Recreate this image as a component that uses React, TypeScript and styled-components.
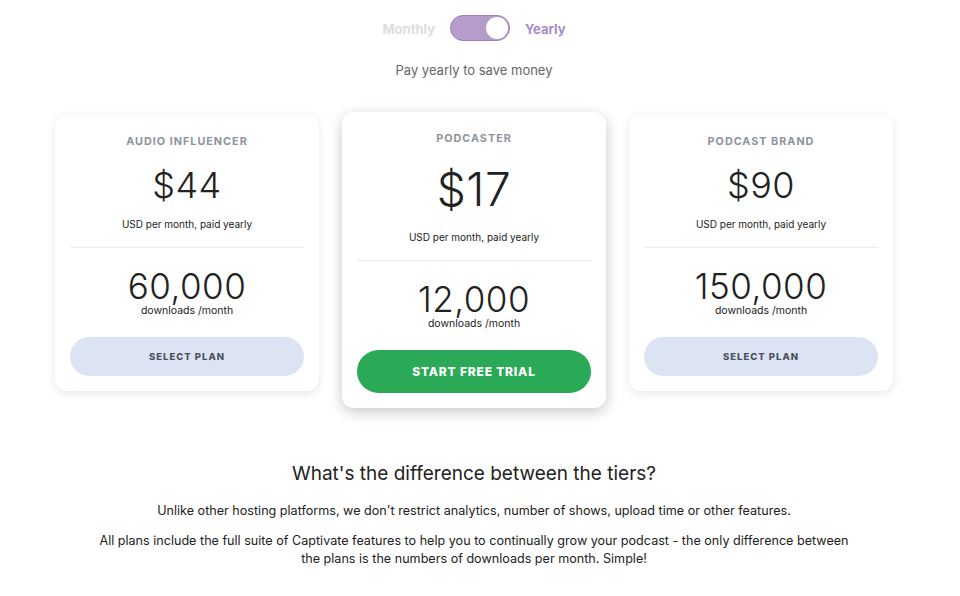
import React, { useState } from "react";
import styled, { createGlobalStyle } from "styled-components";

const Global = createGlobalStyle`
  html, body { margin: 0; padding: 0; background: #fff; }
  body { font-family: "Inter", "Noto Sans", sans-serif; color: #222; }
  * { box-sizing: border-box; }
`;

const Page = styled.div`
  width: 948px;
  display: flex;
  flex-direction: column;
  align-items: center;
  padding-top: 15px;
`;

const ToggleRow = styled.div`
  display: flex;
  align-items: center;
  gap: 15px;
  height: 26px;
`;

const ToggleLabel = styled.span<{ $active: boolean }>`
  font-size: 13px;
  font-weight: 700;
  color: ${(p) => (p.$active ? "#a68ac7" : "#dedede")};
  padding-top: 1px;
`;

const Switch = styled.button<{ $on: boolean }>`
  width: 60px;
  height: 26px;
  border-radius: 13px;
  border: 1.5px solid #9c7fbf;
  background: #b69ccb;
  display: flex;
  align-items: center;
  justify-content: ${(p) => (p.$on ? "flex-end" : "flex-start")};
  padding: 0 1px;
  cursor: pointer;
`;

const Knob = styled.span`
  width: 22px;
  height: 22px;
  border-radius: 50%;
  background: #fff;
  display: block;
`;

const Subtitle = styled.p`
  margin: 20px 0 0;
  font-size: 13px;
  color: #666;
  line-height: 18px;
`;

const Cards = styled.div`
  display: flex;
  align-items: flex-start;
  gap: 23px;
  margin-top: 33px;
`;

const Card = styled.div<{ $featured?: boolean }>`
  width: 264px;
  background: #fff;
  border-radius: 12px;
  margin-top: ${(p) => (p.$featured ? "0" : "3px")};
  padding: 19px 15px 15px;
  display: flex;
  flex-direction: column;
  align-items: center;
  box-shadow: ${(p) =>
    p.$featured
      ? "0 4px 14px rgba(0,0,0,0.22)"
      : "0 2px 10px rgba(0,0,0,0.10)"};
`;

const PlanName = styled.div`
  font-size: 10.8px;
  font-weight: 700;
  letter-spacing: 1px;
  color: #8e939b;
  line-height: 16px;
`;

const Price = styled.div<{ $big?: boolean }>`
  font-size: ${(p) => (p.$big ? "46px" : "36px")};
  font-weight: 300;
  color: #222;
  line-height: ${(p) => (p.$big ? "56px" : "42px")};
  margin-top: 14px;
  letter-spacing: 0.5px;
`;

const PriceNote = styled.div<{ $big?: boolean }>`
  font-size: 10px;
  color: #222;
  line-height: 14px;
  margin-top: ${(p) => (p.$big ? "13px" : "11px")};
`;

const Divider = styled.hr`
  width: 100%;
  border: none;
  border-top: 1.5px solid #ececec;
  margin: 16px 0 0;
`;

const Downloads = styled.div`
  font-size: 35px;
  font-weight: 300;
  color: #222;
  line-height: 34px;
  margin-top: 21px;
  letter-spacing: 0.5px;
`;

const DownloadsNote = styled.div`
  font-size: 10.5px;
  color: #222;
  line-height: 12px;
  margin-top: 2px;
`;

const Button = styled.button<{ $primary?: boolean }>`
  width: 100%;
  margin-top: 20px;
  height: ${(p) => (p.$primary ? "43px" : "39px")};
  border: none;
  border-radius: 22px;
  background: ${(p) => (p.$primary ? "#2aa956" : "#dce4f4")};
  color: ${(p) => (p.$primary ? "#fff" : "#4a4f60")};
  font-family: inherit;
  font-weight: 800;
  font-size: ${(p) => (p.$primary ? "12px" : "9.5px")};
  letter-spacing: ${(p) => (p.$primary ? "0.8px" : "1px")};
  cursor: pointer;
`;

const Heading = styled.h2`
  margin: 53px 0 0;
  font-size: 19px;
  font-weight: 400;
  color: #222;
  line-height: 26px;
`;

const Para = styled.p<{ $first?: boolean }>`
  margin: ${(p) => (p.$first ? "15px" : "12px")} 0 0;
  font-size: 12.6px;
  line-height: 18px;
  color: #222;
  text-align: center;
  max-width: 765px;
`;

type Plan = {
  name: string;
  price: string;
  downloads: string;
  featured?: boolean;
  cta: string;
};

const plans: Plan[] = [
  { name: "AUDIO INFLUENCER", price: "$44", downloads: "60,000", cta: "SELECT PLAN" },
  { name: "PODCASTER", price: "$17", downloads: "12,000", cta: "START FREE TRIAL", featured: true },
  { name: "PODCAST BRAND", price: "$90", downloads: "150,000", cta: "SELECT PLAN" },
];

export default function App() {
  const [yearly, setYearly] = useState(true);
  return (
    <>
      <Global />
      <Page>
        <ToggleRow>
          <ToggleLabel $active={!yearly}>Monthly</ToggleLabel>
          <Switch $on={yearly} onClick={() => setYearly(!yearly)} aria-label="toggle billing">
            <Knob />
          </Switch>
          <ToggleLabel $active={yearly}>Yearly</ToggleLabel>
        </ToggleRow>
        <Subtitle>Pay yearly to save money</Subtitle>
        <Cards>
          {plans.map((p) => (
            <Card key={p.name} $featured={p.featured}>
              <PlanName>{p.name}</PlanName>
              <Price $big={p.featured}>{p.price}</Price>
              <PriceNote $big={p.featured}>USD per month, paid yearly</PriceNote>
              <Divider />
              <Downloads>{p.downloads}</Downloads>
              <DownloadsNote>downloads /month</DownloadsNote>
              <Button $primary={p.featured}>{p.cta}</Button>
            </Card>
          ))}
        </Cards>
        <Heading>What's the difference between the tiers?</Heading>
        <Para $first>
          Unlike other hosting platforms, we don't restrict analytics, number of shows, upload time or other features.
        </Para>
        <Para>
          All plans include the full suite of Captivate features to help you to continually grow your podcast - the only difference between the plans is the numbers of downloads per month. Simple!
        </Para>
      </Page>
    </>
  );
}
